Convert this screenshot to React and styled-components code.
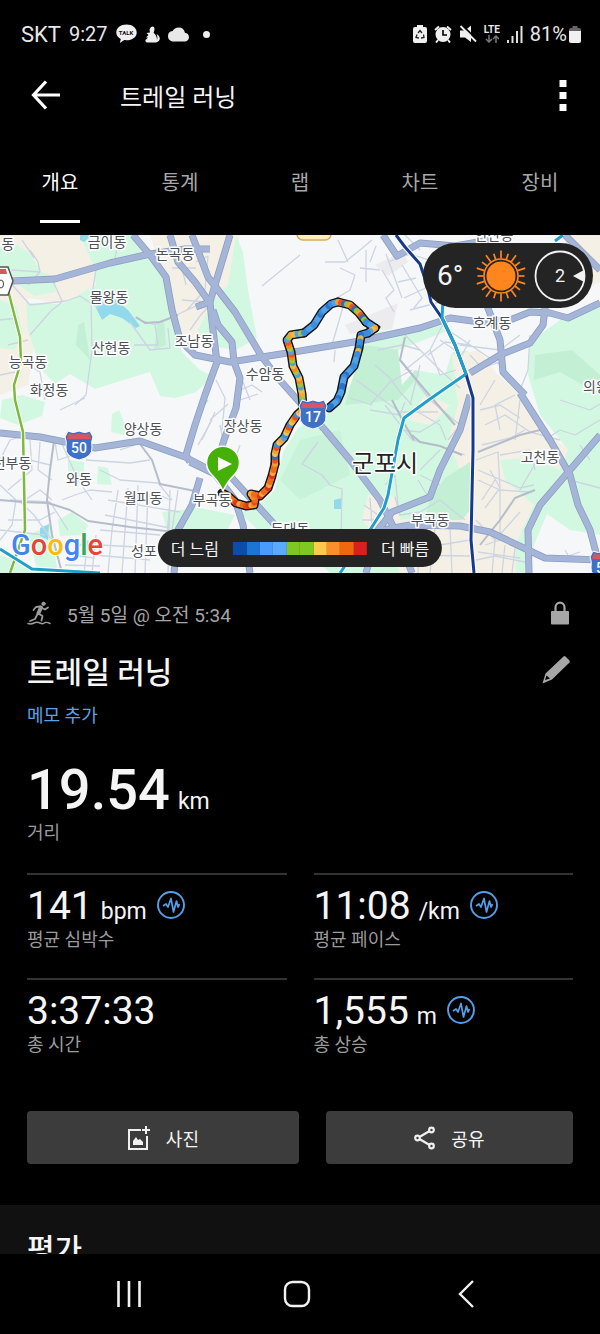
import React from 'react';
import styled, { createGlobalStyle } from 'styled-components';
import { MdCloud } from 'react-icons/md';

const AREAS = [
  { fill: '#f5f0e6', points: '0,235 90,235 92,262 96,285 62,304 28,298 34,345 28,385 0,395' },
  { fill: '#d3f8e2', points: '0,248 14,243 28,252 42,272 55,277 56,292 34,296 18,284 0,290' },
  { fill: '#d3f8e2', points: '80,235 135,235 150,252 163,270 170,300 175,330 182,352 200,370 213,376 196,392 175,398 160,396 150,372 130,378 95,389 70,374 55,384 40,368 28,330 26,303 62,304 96,285 92,262' },
  { fill: '#c3efd5', points: '78,325 84,322 90,360 76,345' },
  { fill: '#c3efd5', points: '157,325 164,322 166,345 154,350' },
  { fill: '#f5f0e6', points: '150,235 240,235 230,290 205,322 197,352 186,352 172,325 166,285' },
  { fill: '#d3f8e2', points: '236,235 243,252 248,290 257,338 236,350 205,345 198,330 214,300 228,285' },
  { fill: '#d3f8e2', points: '2,400 22,395 45,402 42,416 18,425 0,418' },
  { fill: '#d3f8e2', points: '0,300 16,305 22,330 15,350 0,348' },
  { fill: '#ececef', points: '345,325 398,303 392,329 350,334' },
  { fill: '#ececef', points: '375,265 402,252 408,262 388,276' },
  { fill: '#d3f8e2', points: '362,348 378,332 440,324 462,345 480,365 490,430 475,520 440,573 330,573 300,545 258,530 240,513 262,502 275,490 283,452 298,428 330,412 352,382' },
  { fill: '#c3efd5', points: '365,345 400,350 420,375 398,400 345,405 352,380' },
  { fill: '#c8f3da', points: '300,440 340,430 350,475 300,500 280,480' },
  { fill: '#f6f7f9', points: '398,350 455,328 475,350 452,352 445,375 415,370 402,385' },
  { fill: '#f5f0e6', points: '452,355 480,350 495,372 520,395 545,430 568,450 560,480 530,520 530,573 400,573 385,545 362,520 368,495 395,497 400,520 440,515 460,470 448,440 458,405' },
  { fill: '#c3efd5', points: '430,500 445,478 470,462 474,505 462,520 424,520' },
  { fill: '#d3f8e2', points: '530,342 560,320 600,302 600,573 516,573 515,545 534,505 505,480 500,460 530,458 560,470 568,450 540,415 528,375' },
  { fill: '#c3efd5', points: '535,355 572,350 600,375 600,395 560,372 534,380' },
  { fill: '#f6f7f9', points: '547,514 570,530 600,535 600,573 530,573 534,545' },
  { fill: '#f5f0e6', points: '565,235 600,235 600,282 585,290 565,270' },
  { fill: '#f5f0e6', points: '425,395 450,405 430,425 408,420' },
  { fill: '#d3f8e2', points: '112,414 119,410 127,430 124,435 111,432' },
  { fill: '#d3f8e2', points: '98,466 108,468 112,485 97,484' },
  { fill: '#d3f8e2', points: '68,460 84,462 84,478 68,482' },
  { fill: '#d3f8e2', points: '58,520 72,512 88,525 84,535 60,536' },
  { fill: '#d3f8e2', points: '162,512 200,508 235,515 225,535 168,535' },
  { fill: '#d3f8e2', points: '0,555 22,562 40,573 0,573' },
  { fill: '#d3f8e2', points: '28,535 50,525 58,573 38,573' },
  { fill: '#92d9ec', points: '94,304 115,299 128,310 140,326 136,328 122,318 110,314 102,320' },
  { fill: '#92d9ec', points: '80,235 92,235 84,242 80,240' },
  { fill: '#92d9ec', points: '334,500 342,498 342,509 334,509' },
  { fill: '#92d9ec', points: '40,528 49,524 48,540 40,536' },
];

const MINOR_ROADS = [
  'M30 250L38 262L40 272L28 285M22 240L34 258M40 272L12 270M8 280L30 305L66 301L80 296L98 308M52 279L62 301M96 270L91 300L92 350L86 395L75 405',
  'M30 335L50 312L62 302M0 320L18 318M8 345L28 340M20 360L40 372L45 400M0 375L15 372M60 410L85 398M120 235L115 258',
  'M135 318L155 325L170 318L198 305M130 322L150 350L170 348L168 328M155 325L158 345L134 345M180 260L186 285M196 262L208 256L205 290L187 310M172 268L196 268M182 300L208 302M214 300L200 316L190 330M185 350L190 335',
  'M300 255L262 286M216 380L225 398L222 430M236 392L252 385L262 392M240 400L258 394M243 382L250 400M228 404L210 420M212 420L198 445',
  'M325 262L345 262L360 250L372 240M340 268L355 275L350 290L320 308M348 262L338 240M366 250L366 282M345 300L332 345M335 350L334 362M370 262L376 246',
  'M382 270L394 290L386 298L394 312M386 254L402 298M402 265L422 298L414 308M398 282L416 278M404 298L430 286M410 310L440 302M388 262L410 254L435 262M380 270L360 268M420 250L405 235',
  'M405 335L422 352L440 370L460 388M445 320L430 350L440 375L456 370M440 340L462 355L470 340M428 355L445 342L470 345M448 330L500 365M460 345L500 350L520 335M470 355L482 368L500 362M495 380L480 405M530 335L528 370L520 390',
  'M375 365L390 378L400 392L412 405M370 405L390 382L412 370M378 350L402 345L420 350M350 398L372 405M356 380L400 412L438 412M415 380L430 400L450 385M420 365L410 405M430 350L405 370',
  'M385 405L412 440L440 446L465 455M370 410L400 415L405 402M430 400L460 425L448 440M418 412L440 425L446 440M400 430L420 432L440 420M420 470L440 450M420 475L440 485M418 480L430 500',
  'M480 410L500 405L520 418M485 425L505 415L530 432L560 440M482 445L510 438L525 430M490 470L500 488L485 508M478 470L520 488L534 485M478 480L500 490L530 492M500 490L500 540L485 545M476 460L498 452L500 488M482 500L495 480M476 520L495 540L520 512',
  'M500 430L495 405L515 395M520 400L515 440M530 450L535 470M540 455L520 490M500 455L530 450M545 440L560 430L575 435L600 420M580 445L590 460M560 400L590 410L600 404M570 480L600 488',
  'M476 560L495 556L525 562M495 540L492 573M478 552L520 558M505 545L502 573M515 548L512 573M400 535L440 545L470 540M420 530L418 573M435 528L430 573M400 555L470 556M450 528L452 573M565 550L572 562M556 560L580 552',
  'M364 505L378 515M362 520L376 520M364 535L378 530M395 497L400 515L420 512L440 500L465 520M370 498L372 525M385 485L395 475L398 505M318 442L302 464L322 475L330 485L342 489L341 540',
  'M0 460L10 440L20 437M30 440L32 470L8 490M40 442L38 470L52 480M10 500L50 502L68 530M0 485L16 500L12 525L0 540M18 500L34 515L52 540M30 460L50 465M25 500L40 490L52 500M8 520L40 520L55 512M0 530L45 535M62 500L75 495L90 490L112 492',
  'M86 460L130 463L150 460M100 470L120 480L158 483M118 490L112 530L108 573M128 488L122 573M138 485L135 573M148 490L145 573M108 500L180 512M105 515L170 528M100 530L160 535M100 545L155 548M130 500L160 495L170 500L165 560M170 490L168 573M95 555L150 560M158 483L172 500M178 490L172 530',
  'M55 442L58 460L70 456M62 444L78 480L92 500M96 535L92 573M88 540L84 573M75 545L95 545M70 555L95 558M65 565L100 566M120 450L135 445M202 440L215 412M208 400L200 410M225 450L220 425M232 468L240 445M250 506L262 498',
];

const GREY_ROADS = [
  'M54 441L50 470L47 500L52 535L62 573',
  'M0 500L22 502L48 503L70 510L88 521L130 527L175 532',
  'M140 444L152 460L160 484L195 491',
  'M136 317L145 323L160 322L178 315',
  'M405 337L400 360L425 390L455 425',
  'M412 435L420 442L440 446L462 455M478 452L520 435L540 430',
  'M392 400L405 425L414 440',
  'M480 545L500 520L515 498L535 490',
];

const MAJOR_ROADS = [
  'M12 281L55 279L110 263L150 254L185 249L210 249',
  'M133 235L150 255L166 277L172 310L180 340L195 355L230 362L262 357L300 351L360 341L420 328L450 318L480 322L510 320L530 312L550 313L568 318L600 303',
  'M170 235L178 262L195 282L210 303L213 330L217 362L205 395L195 425L186 455L190 462',
  'M230 235L218 275L210 302L196 307',
  'M192 235L208 277L235 312L262 357L278 378L302 405L325 430L350 460L380 500L395 530L412 573',
  'M213 310L218 325L232 342L234 362L240 378L236 408L224 440L215 470',
  'M0 433L40 437L95 448L140 441L185 457L210 470L232 478L275 525',
  'M200 478L192 505L178 530L174 573',
  'M190 462L215 474L235 500L243 525L250 573',
  'M470 395L460 430L440 470L430 497L392 512L378 530L366 573',
  'M383 530L410 525L460 526L490 532L545 558L600 560',
  'M520 393L550 440L570 475L578 505L590 530L598 560',
  'M600 435L570 470L540 505L528 530L529 573',
  'M470 373L500 355L530 343L543 325L546 300',
  'M486 303L500 340L503 372L525 395',
  'M565 235L600 270',
  'M383 235L397 256L420 243L455 246L490 240',
];

const LABELS = [
  { text: '금이동', x: 107, y: 247 },
  { text: '동', x: 8, y: 249 },
  { text: '논곡동', x: 175, y: 259 },
  { text: '물왕동', x: 109, y: 302 },
  { text: '산현동', x: 111, y: 353 },
  { text: '조남동', x: 194, y: 346 },
  { text: '능곡동', x: 28, y: 367 },
  { text: '화정동', x: 49, y: 395 },
  { text: '수암동', x: 265, y: 379 },
  { text: '양상동', x: 143, y: 434 },
  { text: '장상동', x: 243, y: 431 },
  { text: '선부동', x: 12, y: 468 },
  { text: '와동', x: 79, y: 484 },
  { text: '월피동', x: 143, y: 503 },
  { text: '부곡동', x: 212, y: 505 },
  { text: '성포', x: 144, y: 556 },
  { text: '둔대동', x: 290, y: 534 },
  { text: '호계동', x: 492, y: 328 },
  { text: '고천동', x: 540, y: 462 },
  { text: '부곡동', x: 430, y: 525 },
  { text: '의왕', x: 596, y: 392 },
  { text: '안산동', x: 494, y: 240 },
];

const TONES = {
  hot: ['#ef6a1a', '#e0321c', '#f58a22', '#ef6a1a', '#f3a83a', '#ea4a1a', '#f58a22'],
  warm: ['#f3a83a', '#ef5a1a', '#a9c43a', '#f5b944', '#e8521e', '#f58a22', '#4ea2e8'],
  mixed: ['#f0a030', '#3b8de0', '#8fc63a', '#e8521e', '#f5c04a', '#4ea2e8', '#2b6cc0'],
  cool: ['#3b8de0', '#2873cc', '#4ea2e8', '#3b8de0', '#e8b44a', '#2873cc', '#4ea2e8'],
};

const ROUTE = [
  { tone: 'hot', points: [[222, 493], [229, 497], [236, 503], [246, 506], [254, 505], [255, 500], [251, 494], [260, 496], [268, 488], [272, 476], [275, 464]] },
  { tone: 'mixed', points: [[275, 464], [275, 454], [277, 445], [284, 438], [290, 425], [297, 415], [305, 408]] },
  { tone: 'warm', points: [[303, 406], [302, 394], [299, 378], [293, 366], [291, 352], [287, 340], [291, 335], [304, 333]] },
  { tone: 'cool', points: [[304, 333], [314, 325], [322, 312], [331, 304], [338, 302]] },
  { tone: 'mixed', points: [[338, 302], [350, 305], [359, 313], [366, 322]] },
  { tone: 'cool', points: [[366, 322], [375, 328]] },
  { tone: 'warm', points: [[375, 328], [368, 333]] },
  { tone: 'cool', points: [[368, 333], [361, 335], [359, 348], [354, 366], [344, 377], [341, 392], [337, 401], [329, 408]] },
];

const LEGEND_COLORS = ['#0b4da9', '#1976d5', '#4a9bff', '#5aabff', '#7fc81f', '#7fc81f', '#ffc94e', '#fb8f2b', '#ef680f', '#d81f22'];

const TABS = ['개요', '통계', '랩', '차트', '장비'];

const STATS = [
  { value: '141', unit: 'bpm', label: '평균 심박수', chart: true },
  { value: '11:08', unit: '/km', label: '평균 페이스', chart: true },
  { value: '3:37:33', label: '총 시간' },
  { value: '1,555', unit: 'm', label: '총 상승', chart: true },
];

// cut a leg into short pieces so that each can carry its own pace colour
const splitLeg = ({ tone, points }) => {
  const pieces = [];
  const colors = TONES[tone];
  points.slice(1).forEach(([x2, y2], i) => {
    const [x1, y1] = points[i];
    const count = Math.max(1, Math.round(Math.hypot(x2 - x1, y2 - y1) / 3));
    const at = (t) => [x1 + (x2 - x1) * t, y1 + (y2 - y1) * t];
    for (let n = 0; n < count; n++) {
      pieces.push({
        from: at(n / count),
        to: at((n + 1) / count),
        color: colors[(pieces.length * 3 + i * 2) % colors.length],
      });
    }
  });
  return pieces;
};

const Shield = ({ x, y, label }) => (
  <g transform={`translate(${x} ${y})`}>
    <path d="M-11 -14Q-6 -11 0 -14Q6 -11 11 -14L14 -8Q12 -4 13 2Q14 12 0 15Q-14 12 -13 2Q-12 -4 -14 -8Z" fill="#3f72c6" stroke="#fff" strokeWidth="1" />
    <path d="M-10 -12Q-5 -9 0 -12Q5 -9 10 -12L12 -6H-12Z" fill="#da5560" />
    <ShieldText y="8">{label}</ShieldText>
  </g>
);

const RouteMap = () => (
  <MapSvg viewBox="0 235 600 338" role="img" aria-label="트레일 러닝">
    <rect y="235" width="600" height="338" fill="#f6f7f9" />
    {AREAS.map((area) => <polygon key={area.points} {...area} />)}
    <g fill="none" strokeLinejoin="round">
      {MINOR_ROADS.map((d) => <path key={d} d={d} stroke="#cdd4e2" strokeWidth="1.3" />)}
      {GREY_ROADS.map((d) => <path key={d} d={d} stroke="#b5bdca" strokeWidth="2" />)}
      {MAJOR_ROADS.map((d) => <path key={d} d={d} stroke="#8b9cc2" strokeWidth="7" />)}
      {MAJOR_ROADS.map((d) => <path key={d} d={d} stroke="#a5b5d7" strokeWidth="5.500" />)}
      <path d="M8 290L20 337L21 362L14 385L15 400L23 432L25 530L10 573" stroke="#fff" strokeWidth="4.5" />
      <path d="M8 290L20 337L21 362L14 385L15 400L23 432L25 530L10 573" stroke="#7cba3b" strokeWidth="2.5" />
      <path d="M0 549L32 569L100 573M443 300L442 318L455 345L466 374L430 399L404 418L398 440L388 495L384 508L370 530L340 573" stroke="#fff" strokeWidth="5" />
      <path d="M396 235L405 247L420 264L427 285L431 302L442 318L455 345L466 374L473 398L473 450L471 540L474 573" stroke="#fff" strokeWidth="5" />
      <path d="M396 235L405 247L420 264L427 285L431 302L442 318L455 345L466 374L473 398L473 450L471 540L474 573" stroke="#173a8c" strokeWidth="3" />
      <path d="M0 549L32 569L100 573M555 241L563 235M443 300L442 318L455 345L466 374L430 399L404 418L398 440L388 495L384 508L370 530L340 573" stroke="#209fc9" strokeWidth="3" />
    </g>
    <g>
      <path d="M-12 267H8L13 281L8 295H-12Z" fill="#fff" stroke="#555" strokeWidth="1.5" />
      <path d="M0 269H6L7 274H0Z" fill="#da5560" />
      <ellipse cx="1" cy="284" rx="2.5" ry="4" fill="none" stroke="#444" />
      <rect x="297" y="222" width="34" height="18" rx="6" fill="#fff0b8" stroke="#d2ae52" strokeWidth="1.5" />
    </g>
    <g fill="none" stroke="#161616" strokeLinecap="round" strokeLinejoin="round">
      {ROUTE.map(({ points }) => (
        <polyline key={points[0].join()} points={points.join(' ')} strokeWidth="9" />
      ))}
      <path d="M370 329L379 327L373 332" strokeWidth="3" />
    </g>
    <g strokeLinecap="round">
      {ROUTE.flatMap(splitLeg).map(({ from, to, color }, i) => (
        <line key={i} x1={from[0]} y1={from[1]} x2={to[0]} y2={to[1]} stroke={color} strokeWidth="6" />
      ))}
    </g>
    <circle cx="221" cy="493" r="2.5" fill="#161616" />
    {LABELS.map((label) => (
      <MapLabel key={label.text + label.x} x={label.x} y={label.y}>{label.text}</MapLabel>
    ))}
    <MapLabel $city x="385" y="472">군포시</MapLabel>
    <Shield x={79} y={445} label="50" />
    <Shield x={313} y={414} label="17" />
    <Shield x={604} y={565} label="50" />
    <path d="M223 491Q219 482 212 475A16.5 16.5 0 1 1 234 475Q227 482 223 491Z" fill="#45b007" stroke="#fff" strokeWidth="1.5" />
    <path d="M218 457V471L232 464Z" fill="#fff" />
    <GoogleText x="11" y="555">
      <tspan fill="#4285f4">G</tspan>
      <tspan fill="#ea4335">o</tspan>
      <tspan fill="#fbbc05">o</tspan>
      <tspan fill="#4285f4">g</tspan>
      <tspan fill="#34a853">l</tspan>
      <tspan fill="#ea4335">e</tspan>
    </GoogleText>
  </MapSvg>
);

const Sun = () => (
  <svg width="52" height="52" viewBox="-26 -26 52 52" aria-hidden="true">
    <circle r="14.5" fill="#ff861e" />
    <circle r="17" fill="none" stroke="#ff861e" strokeWidth="1.6" />
    {Array.from({ length: 20 }, (_, i) => (
      <line key={i} y1="-17.5" y2={i % 2 ? -23.5 : -25.5} stroke="#ff861e" strokeWidth="1.7" transform={`rotate(${i * 18})`} />
    ))}
  </svg>
);

const Wind = () => (
  <svg width="52" height="52" viewBox="-26 -26 52 52" aria-hidden="true">
    <circle r="24.5" fill="none" stroke="#f2f2f2" strokeWidth="1.8" />
    <path d="M13 0L24 -6Q26 0 24 6Z" fill="#f2f2f2" />
    <WindText y="6">2</WindText>
  </svg>
);

const ChartBadge = () => (
  <ChartButton aria-label="차트">
    <svg width="28" height="28" viewBox="0 0 28 28" fill="none" stroke="#559fe8">
      <circle cx="14" cy="14" r="13" strokeWidth="1.9" />
      <path d="M6 15L9 13L11 16L14 7.500L16.500 21L19.500 10L21 16L22.500 13" strokeWidth="1.7" strokeLinejoin="round" />
    </svg>
  </ChartButton>
);

const App = () => (
  <Screen>
    <GlobalStyle />
    <StatusBar>
      <StatusGroup $gap={8}>
        <Carrier>SKT</Carrier>
        <Clock>9:27</Clock>
        <svg width="21" height="20" viewBox="0 0 21 20" fill="#f0f0f0" aria-hidden="true">
          <path d="M10.500 0.500C4.700 0.500 0.300 3.800 0.300 8.400C0.300 11.200 2 13.500 4.800 14.900L3.800 19L8.300 16.100C15.500 16.900 20.700 13.400 20.700 8.400C20.700 3.800 16.300 0.500 10.500 0.500Z" />
          <TalkText x="10" y="11">TALK</TalkText>
        </svg>
        <svg width="15" height="17" viewBox="0 0 15 17" fill="#f0f0f0" aria-hidden="true">
          <path d="M6 1Q9 -0.500 9.500 2.500Q9.500 5 8.500 6.500L11 9.500Q12 12 12 14Q13 11 11.500 8Q14.500 9.500 14.800 12Q15 15.500 11 16.500H3Q0 16.500 0.500 14Q2 12.500 3 11.500L1 11.500L3.500 9L1.500 7L5 6.500L4.500 3.500Z" />
        </svg>
        <MdCloud size={21} />
        <Dot />
      </StatusGroup>
      <StatusGroup $gap={7}>
        <svg width="14" height="18" viewBox="0 0 14 18" aria-hidden="true">
          <path d="M4 0H10V2H12Q14 2 14 4V16Q14 18 12 18H2Q0 18 0 16V4Q0 2 2 2H4Z" fill="#f0f0f0" />
          <path d="M5 8L7 5.500L9 8M10.500 9.500L11 12.500L8 13M6 13L3 12.500L4 9.500" fill="none" stroke="#222" strokeWidth="1.3" />
        </svg>
        <svg width="18" height="18" viewBox="2 0 18 18" aria-hidden="true">
          <circle cx="11" cy="9.500" r="7.500" fill="#f0f0f0" />
          <path d="M3 5L7 1.500M19 5L15 1.500M6 15L4 17.500M16 15L18 17.500" stroke="#f0f0f0" strokeWidth="2" />
          <path d="M11 5V10H15" fill="none" stroke="#000" strokeWidth="1.600" />
        </svg>
        <svg width="18" height="18" viewBox="0 0 18 18" aria-hidden="true">
          <path d="M1 5.500H6L12 0.500V17L6 12.500H1Z" fill="#f0f0f0" />
          <path d="M3.500 0.500L18 14.500" stroke="#000" strokeWidth="1.800" />
          <path d="M1.500 1L17 16.500" stroke="#f0f0f0" strokeWidth="1.800" />
        </svg>
        <Network>
          LTE
          <svg width="14" height="8" viewBox="0 0 14 8" fill="none" stroke="#777" strokeWidth="1.500" aria-hidden="true">
            <path d="M4 0V7M1 4L4 7L7 4M11 8V1M8 4L11 1L14 4" />
          </svg>
        </Network>
        <svg width="16" height="17" viewBox="0 0 16 17" fill="#e0e0e0" aria-hidden="true">
          <path d="M0 14H2V17H0ZM4.500 10H6.500V17H4.500ZM9 5H11V17H9ZM13.500 0H15.500V17H13.500Z" />
        </svg>
        <Battery>
          81%
          <svg width="12" height="17" viewBox="0 0 12 17" aria-hidden="true">
            <path d="M3.500 0H8.500V2H10Q12 2 12 4V6H0V4Q0 2 2 2H3.500Z" fill="#666" />
            <path d="M0 5H12V15Q12 17 10 17H2Q0 17 0 15Z" fill="#f0f0f0" />
          </svg>
        </Battery>
      </StatusGroup>
    </StatusBar>

    <Header>
      <IconButton aria-label="뒤로">
        <svg width="30" height="30" viewBox="0 0 30 30" fill="none" stroke="#fff" strokeWidth="3.200">
          <path d="M29 15H3M15 1.500L2.500 15L15 28.500" />
        </svg>
      </IconButton>
      <HeaderTitle>트레일 러닝</HeaderTitle>
      <IconButton aria-label="메뉴">
        <svg width="8" height="32" viewBox="0 0 8 32" fill="#fff">
          <path d="M0.500 1H7.500V8H0.500ZM0.500 13H7.500V20H0.500ZM0.500 25H7.500V32H0.500Z" />
        </svg>
      </IconButton>
    </Header>

    <TabBar>
      {TABS.map((tab, i) => <Tab key={tab} $active={i === 0}>{tab}</Tab>)}
    </TabBar>

    <Main>
      <MapArea>
        <RouteMap />
        <Weather>
          <span>6°</span>
          <Sun />
          <Wind />
        </Weather>
        <Legend>
          <span>더 느림</span>
          <LegendBar>
            {LEGEND_COLORS.map((color, i) => <LegendStep key={i} $color={color} />)}
          </LegendBar>
          <span>더 빠름</span>
        </Legend>
      </MapArea>

      <Summary>
        <DateRow>
          <svg width="24" height="24" viewBox="0 0 24 24" fill="none" stroke="#9b9b9b" strokeLinecap="round" strokeLinejoin="round" aria-hidden="true">
            <circle cx="16.500" cy="2.800" r="1.700" fill="#9b9b9b" />
            <path d="M14 6.500L11.500 12" strokeWidth="4" />
            <path d="M13 5.500L9 6L6.500 9M15 7L18 8.500L21 6.500M12 13L15.500 15L14.500 19.500M10.500 13L8 18L3 20" strokeWidth="1.800" />
            <path d="M1 22.500Q4 23.500 7 22Q10 20.500 13 22Q16 23.500 18 21.500Q20 21 23 22.500" strokeWidth="1.500" />
          </svg>
          <DateText>5월 5일 @ 오전 5:34</DateText>
          <IconButton aria-label="비공개">
            <svg width="26" height="24" viewBox="0 0 26 24">
              <path d="M8.500 11V6.500A4.500 4.800 0 0 1 17.500 6.500V11" fill="none" stroke="#a6a6a6" strokeWidth="2.200" />
              <rect x="4" y="10" width="18" height="13.500" rx="1" fill="#a6a6a6" />
            </svg>
          </IconButton>
        </DateRow>
        <TitleRow>
          <Title>트레일 러닝</Title>
          <IconButton aria-label="편집">
            <svg width="32" height="30" viewBox="0 0 32 30" fill="#a6a6a6">
              <path d="M22.500 1.500Q23.500 0.500 24.500 1.500L28.500 5.500Q29.200 6.500 28.500 7.500L11 24.500L1.500 28.500L4.500 18.500ZM5.500 20.500L4 25L9 23.500Z" fillRule="evenodd" />
            </svg>
          </IconButton>
        </TitleRow>
        <NoteLink href="#note">메모 추가</NoteLink>
        <Distance>19.54<Unit>km</Unit></Distance>
        <Label>거리</Label>

        <StatGrid>
          {STATS.map(({ value, unit, label, chart }) => (
            <Stat key={label}>
              <Value>
                {value}
                {unit && <Unit>{unit}</Unit>}
                {chart && <ChartBadge />}
              </Value>
              <Label>{label}</Label>
            </Stat>
          ))}
        </StatGrid>

        <Actions>
          <ActionButton>
            <svg width="24" height="26" viewBox="0 0 24 26" fill="none" stroke="#f0f0f0" strokeWidth="2" aria-hidden="true">
              <path d="M14 5H2V24H20V11M19 1V9M15 5H23" />
              <path d="M6 20V16L9 12L11 15L13 14L16 17V20Z" fill="#f0f0f0" stroke="none" />
            </svg>
            사진
          </ActionButton>
          <ActionButton>
            <svg width="22" height="24" viewBox="0 0 22 24" fill="none" stroke="#f0f0f0" strokeWidth="2.200" aria-hidden="true">
              <circle cx="3.500" cy="12" r="2.300" />
              <circle cx="17.500" cy="4" r="2.300" />
              <circle cx="17.500" cy="20" r="2.300" />
              <path d="M5.800 10.700L15.200 5.300M5.800 13.300L15.200 18.700" />
            </svg>
            공유
          </ActionButton>
        </Actions>
      </Summary>

      <Rating>
        <RatingTitle>평가</RatingTitle>
      </Rating>
    </Main>

    <SystemNav>
      <IconButton aria-label="최근 앱">
        <svg width="26" height="28" viewBox="0 0 26 28" stroke="#f2f2f2" strokeWidth="2.600">
          <path d="M2.500 1V27M13 1V27M23.500 1V27" />
        </svg>
      </IconButton>
      <IconButton aria-label="홈">
        <svg width="28" height="28" viewBox="0 0 28 28" fill="none" stroke="#f2f2f2" strokeWidth="2.400">
          <rect x="2" y="2" width="24" height="24" rx="7.500" />
        </svg>
      </IconButton>
      <IconButton aria-label="뒤로 가기">
        <svg width="18" height="28" viewBox="0 0 18 28" fill="none" stroke="#f2f2f2" strokeWidth="2.400">
          <path d="M16 1L3 14L16 27" />
        </svg>
      </IconButton>
    </SystemNav>
  </Screen>
);

export default App;

const GlobalStyle = createGlobalStyle`
  * {
    box-sizing: border-box;
  }
  body {
    margin: 0;
    background: #000;
    color: #f5f5f5;
    font-family: Roboto, "Noto Sans CJK KR", sans-serif;
  }
  button {
    font-family: inherit;
    color: inherit;
    cursor: pointer;
  }
  svg {
    display: block;
    flex-shrink: 0;
  }
`;
const Screen = styled.div`
  display: flex;
  flex-direction: column;
  height: 100vh;
`;
const StatusBar = styled.div`
  display: flex;
  justify-content: space-between;
  align-items: center;
  height: 68px;
  padding: 0 19px 0 21px;
  flex-shrink: 0;
  color: #e8e8e8;
`;
const StatusGroup = styled.div`
  display: flex;
  align-items: center;
  gap: ${(props) => props.$gap}px;
`;
const Carrier = styled.span`
  font-size: 22px;
`;
const Clock = styled.span`
  font-size: 20px;
`;
const TalkText = styled.text`
  font: 700 6px Roboto, sans-serif;
  fill: #111;
  text-anchor: middle;
`;
const Dot = styled.i`
  width: 7px;
  height: 7px;
  margin-left: 6px;
  border-radius: 50%;
  background: #f0f0f0;
`;
const Network = styled.span`
  display: flex;
  flex-direction: column;
  align-items: center;
  font-size: 10px;
  line-height: 10px;
  font-weight: 700;
`;
const Battery = styled.span`
  display: flex;
  align-items: center;
  gap: 2px;
  font-size: 20px;
`;
const Header = styled.header`
  display: flex;
  align-items: center;
  height: 54px;
  padding: 0 33px 0 31px;
  flex-shrink: 0;
`;
const IconButton = styled.button`
  display: flex;
  align-items: center;
  justify-content: center;
  padding: 0;
  border: none;
  background: none;
`;
const HeaderTitle = styled.h1`
  flex: 1;
  margin: 0 0 0 59px;
  font-size: 24px;
  font-weight: 400;
`;
const TabBar = styled.nav`
  display: grid;
  grid-template-columns: repeat(5, 1fr);
  height: 113px;
  padding: 26px 0 12px;
  flex-shrink: 0;
`;
const Tab = styled.button`
  position: relative;
  padding: 0 0 8px;
  border: none;
  background: none;
  font-size: 20px;
  color: ${(props) => (props.$active ? '#fff' : '#a8a8a8')};
  &::after {
    content: '';
    display: ${(props) => (props.$active ? 'block' : 'none')};
    position: absolute;
    left: 50%;
    bottom: 0;
    width: 40px;
    height: 3px;
    margin-left: -20px;
    background: #fff;
  }
`;
const Main = styled.main`
  flex: 1;
  min-height: 0;
  overflow: hidden;
`;
const MapArea = styled.div`
  position: relative;
`;
const MapSvg = styled.svg`
  width: 100%;
  height: auto;
`;
const MapLabel = styled.text`
  font: ${(props) => (props.$city ? '400 24px' : '400 14px')} "Noto Sans CJK KR", sans-serif;
  fill: ${(props) => (props.$city ? '#222' : '#4c5057')};
  stroke: #fff;
  stroke-width: 3px;
  stroke-linejoin: round;
  paint-order: stroke;
  text-anchor: middle;
`;
const ShieldText = styled.text`
  font: 500 14px Roboto, sans-serif;
  fill: #fff;
  text-anchor: middle;
`;
const GoogleText = styled.text`
  font: 500 29px Roboto, sans-serif;
  stroke: #fff;
  stroke-width: 2px;
  paint-order: stroke;
`;
const WindText = styled.text`
  font: 400 18px Roboto, sans-serif;
  fill: #f2f2f2;
  text-anchor: middle;
`;
const Weather = styled.div`
  position: absolute;
  top: 8px;
  right: 7px;
  display: flex;
  align-items: center;
  gap: 7px;
  height: 65px;
  padding: 0 7px 0 14px;
  border-radius: 33px;
  background: #242424;
  font-size: 28px;
  span {
    width: 31px;
  }
`;
const Legend = styled.div`
  position: absolute;
  left: 50%;
  bottom: 6px;
  transform: translateX(-50%);
  display: flex;
  align-items: center;
  gap: 14px;
  height: 38px;
  padding: 0 13px;
  border-radius: 19px;
  background: #242424;
  font-size: 16px;
  white-space: nowrap;
`;
const LegendBar = styled.div`
  display: flex;
  width: 134px;
  height: 13px;
`;
const LegendStep = styled.i`
  flex: 1;
  background: ${(props) => props.$color};
`;
const Summary = styled.section`
  padding: 16px 27px 41px;
`;
const DateRow = styled.div`
  display: flex;
  align-items: center;
  height: 48px;
`;
const DateText = styled.span`
  flex: 1;
  margin-left: 16px;
  font-size: 19px;
  color: #a6a6a6;
`;
const TitleRow = styled.div`
  display: flex;
  align-items: center;
  justify-content: space-between;
  height: 66px;
`;
const Title = styled.h2`
  margin: 0;
  font-size: 30px;
  font-weight: 500;
`;
const NoteLink = styled.a`
  display: block;
  font-size: 18px;
  line-height: 26px;
  color: #5aa2ea;
  text-decoration: none;
`;
const Distance = styled.div`
  margin-top: 31px;
  font-size: 56px;
  line-height: 60px;
  font-weight: 500;
`;
const Unit = styled.span`
  margin-left: 8px;
  font-size: 23px;
  line-height: 24px;
  font-weight: 400;
`;
const Label = styled.div`
  font-size: 18px;
  line-height: 26px;
  color: #9b9b9b;
`;
const StatGrid = styled.div`
  display: grid;
  grid-template-columns: 1fr 1fr;
  gap: 25px 27px;
  margin-top: 27px;
`;
const Stat = styled.div`
  padding-top: 8px;
  border-top: 2px solid #333;
`;
const Value = styled.div`
  display: flex;
  align-items: baseline;
  height: 44px;
  font-size: 39px;
  line-height: 46px;
`;
const ChartButton = styled(IconButton)`
  align-self: center;
  margin-left: 10px;
`;
const Actions = styled.div`
  display: grid;
  grid-template-columns: 11fr 10fr;
  gap: 27px;
  margin-top: 53px;
`;
const ActionButton = styled.button`
  display: flex;
  align-items: center;
  justify-content: center;
  gap: 15px;
  height: 53px;
  border: none;
  border-radius: 4px;
  background: #3c3c3c;
  font-size: 18px;
`;
const Rating = styled.section`
  padding: 27px 27px 40px;
  background: #111;
`;
const RatingTitle = styled.h2`
  margin: 0;
  font-size: 30px;
  line-height: 36px;
  font-weight: 500;
`;
const SystemNav = styled.nav`
  display: grid;
  grid-template-columns: repeat(3, 1fr);
  height: 80px;
  padding: 0 50px 0 45px;
  flex-shrink: 0;
`;
